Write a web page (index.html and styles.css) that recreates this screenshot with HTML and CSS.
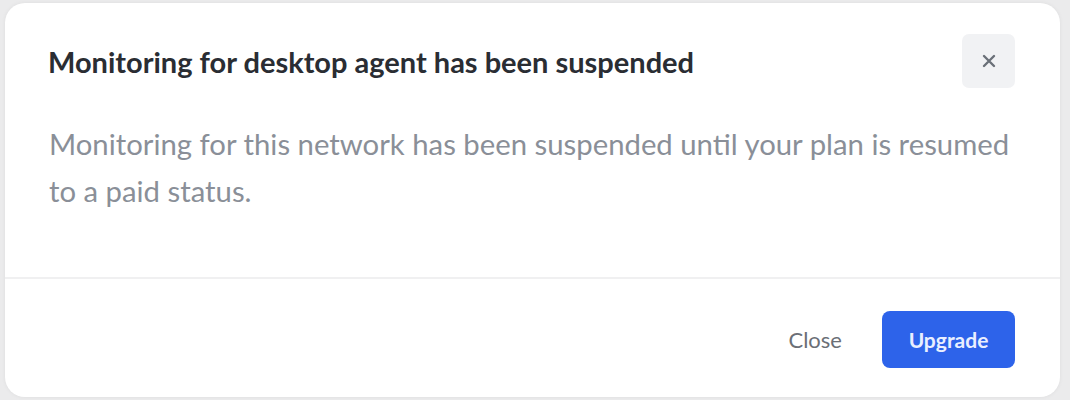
FILE: index.html
```html
<!DOCTYPE html>
<html lang="en">

<head>
  <meta charset="UTF-8">
  <meta name="viewport" content="width=device-width, initial-scale=1.0">
  <title>Monitoring suspended</title>

  <link rel="stylesheet" href="styles.css">
</head>

<body>
  <main class="backdrop">
    <section class="modal" role="dialog" aria-labelledby="modal-title">
      <header class="modal-header">
        <h2 id="modal-title">Monitoring for desktop agent has been suspended</h2>
        <button class="icon-btn" aria-label="Close">
          <svg width="14" height="14" viewBox="0 0 14 14">
            <path d="M2 2 L12 12 M12 2 L2 12" stroke="#6b7078" stroke-width="2.4" stroke-linecap="round" />
          </svg>
        </button>
      </header>

      <div class="modal-body">
        <p>Monitoring for this network has been suspended until your plan is resumed to a paid status.</p>
      </div>

      <footer class="modal-footer">
        <button class="btn btn-text">Close</button>
        <button class="btn btn-primary">Upgrade</button>
      </footer>
    </section>
  </main>
</body>

</html>
```

FILE: styles.css
```css
html,
body {
  margin: 0;
  height: 100%;
}

body {
  background: #ebebec;
  font-family: "Lato", "Open Sans", sans-serif;
}

.backdrop {
  box-sizing: border-box;
  height: 100%;
  padding: 3px 10px 3px 5px;
}

.modal {
  background: #ffffff;
  border-radius: 20px;
  box-shadow: 0 0 4px rgba(0, 0, 0, 0.06);
  display: flex;
  flex-direction: column;
  height: 100%;
}

.modal-header {
  align-items: center;
  display: flex;
  justify-content: space-between;
  padding: 31px 45px 0 43px;
}

.modal-header h2 {
  color: #2a2d33;
  font-size: 29px;
  font-weight: 700;
  margin: 0;
}

.icon-btn {
  align-items: center;
  background: #f1f2f4;
  border: none;
  border-radius: 7px;
  display: flex;
  height: 54px;
  justify-content: center;
  width: 53px;
}

.icon-btn:hover {
  cursor: pointer;
}

.modal-body {
  border-bottom: 2px solid #f0f0f1;
  flex: 1;
  padding: 32px 45px 0 44px;
}

.modal-body p {
  color: #8a8f98;
  font-size: 29.3px;
  line-height: 47px;
  margin: 0;
}

.modal-footer {
  align-items: center;
  column-gap: 40px;
  display: flex;
  justify-content: flex-end;
  padding: 32px 45px 29px;
}

.btn {
  border: none;
  font-family: inherit;
  font-size: 21px;
}

.btn:hover {
  cursor: pointer;
}

.btn-text {
  background: none;
  color: #6b6f76;
  font-size: 22px;
  padding: 0;
}

.btn-primary {
  background: #2d63ea;
  border-radius: 8px;
  color: #e9efff;
  font-weight: 700;
  height: 57px;
  width: 133px;
}
```
